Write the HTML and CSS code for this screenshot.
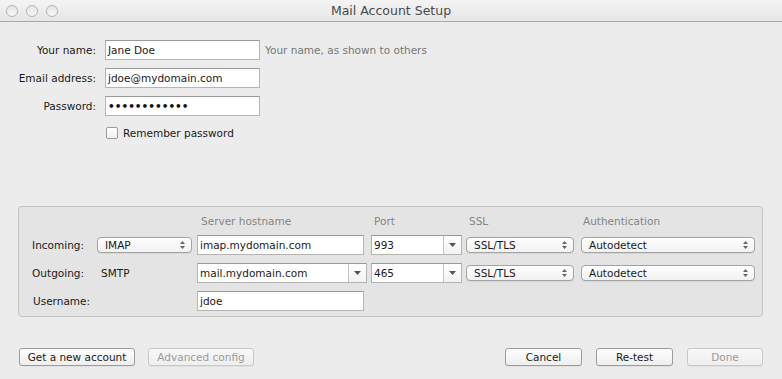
FILE: index.html
```html
<!DOCTYPE html>
<html lang="en">
<head>
    <meta charset="UTF-8">
    <title>Mail Account Setup</title>
    <link rel="stylesheet" href="styles.css">
</head>
<body>
    <div class="window">
        <div class="titlebar">
            <div class="lights">
                <span class="light"></span>
                <span class="light"></span>
                <span class="light"></span>
            </div>
            <div class="title">Mail Account Setup</div>
        </div>

        <div class="panel">
            <div class="identity">
                <label class="label">Your name:</label>
                <div class="row">
                    <div class="field">Jane Doe</div>
                    <span class="hint">Your name, as shown to others</span>
                </div>
                <label class="label">Email address:</label>
                <div class="row">
                    <div class="field">jdoe@mydomain.com</div>
                </div>
                <label class="label">Password:</label>
                <div class="row">
                    <div class="field dots">&bull;&bull;&bull;&bull;&bull;&bull;&bull;&bull;&bull;&bull;&bull;&bull;</div>
                </div>
                <span></span>
                <div class="row check-row">
                    <span class="checkbox"></span>
                    <span>Remember password</span>
                </div>
            </div>

            <div class="servers">
                <span></span>
                <span></span>
                <span class="head head-host">Server hostname</span>
                <span class="head head-port">Port</span>
                <span class="head head-ssl">SSL</span>
                <span class="head head-auth">Authentication</span>

                <span class="slabel">Incoming:</span>
                <div class="popup w-proto"><span>IMAP</span><svg class="updown" width="5" height="8" viewBox="0 0 5 8"><path d="M2.5 0L5 3H0z M2.5 8L5 5H0z" fill="#666"/></svg></div>
                <div class="field w-host">imap.mydomain.com</div>
                <div class="combo w-port"><span class="combo-text">993</span><span class="combo-btn"><svg width="7" height="4" viewBox="0 0 7 4"><path d="M0 0H7L3.5 4z" fill="#555"/></svg></span></div>
                <div class="popup w-ssl"><span>SSL/TLS</span><svg class="updown" width="5" height="8" viewBox="0 0 5 8"><path d="M2.5 0L5 3H0z M2.5 8L5 5H0z" fill="#666"/></svg></div>
                <div class="popup w-auth"><span>Autodetect</span><svg class="updown" width="5" height="8" viewBox="0 0 5 8"><path d="M2.5 0L5 3H0z M2.5 8L5 5H0z" fill="#666"/></svg></div>

                <span class="slabel">Outgoing:</span>
                <span class="smtp">SMTP</span>
                <div class="combo w-hostcombo"><span class="combo-text">mail.mydomain.com</span><span class="combo-btn"><svg width="7" height="4" viewBox="0 0 7 4"><path d="M0 0H7L3.5 4z" fill="#555"/></svg></span></div>
                <div class="combo w-port"><span class="combo-text">465</span><span class="combo-btn"><svg width="7" height="4" viewBox="0 0 7 4"><path d="M0 0H7L3.5 4z" fill="#555"/></svg></span></div>
                <div class="popup w-ssl"><span>SSL/TLS</span><svg class="updown" width="5" height="8" viewBox="0 0 5 8"><path d="M2.5 0L5 3H0z M2.5 8L5 5H0z" fill="#666"/></svg></div>
                <div class="popup w-auth"><span>Autodetect</span><svg class="updown" width="5" height="8" viewBox="0 0 5 8"><path d="M2.5 0L5 3H0z M2.5 8L5 5H0z" fill="#666"/></svg></div>

                <span class="slabel user">Username:</span>
                <span></span>
                <div class="field w-host">jdoe</div>
            </div>

            <div class="actions">
                <div class="group">
                    <button class="btn w-new">Get a new account</button>
                    <button class="btn w-adv" disabled>Advanced config</button>
                </div>
                <div class="group">
                    <button class="btn w-cancel">Cancel</button>
                    <button class="btn w-retest">Re-test</button>
                    <button class="btn w-done" disabled>Done</button>
                </div>
            </div>
        </div>
    </div>
</body>
</html>
```

FILE: styles.css
```css
body {
    margin: 0;
    padding: 0;
    font-family: 'DejaVu Sans', sans-serif;
    font-size: 10.5px;
    color: #1a1a1a;
    background-color: #ececec;
}
.window {
    width: 782px;
    height: 379px;
    overflow: hidden;
    background-color: #ececec;
}
.titlebar {
    height: 21px;
    border-bottom: 1px solid #a9a9a9;
    background: linear-gradient(#f4f4f4, #e6e6e6);
    display: flex;
    align-items: center;
    position: relative;
}
.lights {
    display: flex;
    gap: 8px;
    padding-left: 6px;
}
.light {
    width: 10px;
    height: 10px;
    border: 1px solid #b4b4b4;
    border-radius: 50%;
    background: linear-gradient(#e6e6e6, #f6f6f6);
}
.title {
    position: absolute;
    left: 0;
    right: 0;
    text-align: center;
    font-size: 12.5px;
    color: #4a4a4a;
}
.panel {
    padding: 18px 19px 0 18px;
}
.identity {
    display: grid;
    grid-template-columns: 78px auto;
    column-gap: 9px;
    row-gap: 8px;
    grid-auto-rows: 20px;
}
.label {
    text-align: right;
    align-self: center;
}
.row {
    display: flex;
    align-items: center;
    gap: 5px;
}
.check-row {
    gap: 5px;
    margin-top: -3px;
    padding-left: 1px;
}
.checkbox {
    width: 10px;
    height: 10px;
    border: 1px solid #9c9c9c;
    border-radius: 2px;
    background: linear-gradient(#ffffff, #f0f0f0);
}
.field {
    box-sizing: border-box;
    width: 155px;
    height: 20px;
    line-height: 18px;
    padding-left: 2px;
    background: #fff;
    border: 1px solid #b4b4b4;
    border-top-color: #9a9a9a;
    white-space: nowrap;
}
.dots {
    font-size: 10.5px;
    font-weight: bold;
    color: #111;
}
.hint {
    color: #777;
}
.servers {
    margin-top: 62px;
    border: 1px solid #c4c4c4;
    border-radius: 4px;
    background-color: #e4e4e4;
    padding: 8px 0 5px 0;
    display: grid;
    grid-template-columns: 78px 100px 174px 95px 115px 174px;
    grid-template-rows: 12px 20px 20px 20px;
    row-gap: 8px;
    align-items: center;
}
.head {
    color: #858585;
    line-height: 12px;
}
.head-host { padding-left: 4px; }
.head-port { padding-left: 3px; }
.head-ssl { padding-left: 3px; }
.head-auth { padding-left: 2px; }
.slabel {
    text-align: right;
    padding-right: 13px;
}
.slabel.user {
    text-align: left;
    padding-left: 14px;
    padding-right: 0;
}
.smtp {
    padding-left: 4px;
}
.popup {
    box-sizing: border-box;
    height: 16px;
    border: 1px solid #a3a3a3;
    border-radius: 4px;
    background: linear-gradient(#ffffff, #f1f1f1);
    display: flex;
    align-items: center;
    justify-content: space-between;
    padding: 0 6px 0 7px;
    box-shadow: 0 1px 0 rgba(0,0,0,0.06);
}
.updown {
    display: block;
}
.w-proto { width: 95px; }
.w-host { width: 167px; }
.w-hostcombo { width: 170px; }
.w-port { width: 91px; }
.w-ssl { width: 108px; }
.w-auth { width: 174px; }
.combo {
    box-sizing: border-box;
    height: 20px;
    display: flex;
    background: #fff;
    border: 1px solid #b4b4b4;
    border-top-color: #9a9a9a;
}
.combo-text {
    flex: 1;
    line-height: 18px;
    padding-left: 2px;
    white-space: nowrap;
}
.combo-btn {
    width: 17px;
    border-left: 1px solid #c4c4c4;
    background: linear-gradient(#ffffff, #f2f2f2);
    display: flex;
    align-items: center;
    justify-content: center;
}
.actions {
    margin-top: 31px;
    display: flex;
    justify-content: space-between;
    padding-left: 1px;
}
.group {
    display: flex;
    gap: 14px;
}
.btn {
    box-sizing: border-box;
    height: 18px;
    padding: 0;
    font-family: 'DejaVu Sans', sans-serif;
    font-size: 10.5px;
    color: #1a1a1a;
    border: 1px solid #9c9c9c;
    border-radius: 3px;
    background: linear-gradient(#ffffff, #eeeeee);
    box-shadow: 0 1px 0 rgba(0,0,0,0.05);
}
.btn:disabled {
    color: #9b9b9b;
    border-color: #c9c9c9;
    background: linear-gradient(#f8f8f8, #eeeeee);
}
.w-new { width: 116px; }
.w-adv { width: 106px; margin-left: -1px; }
.w-cancel { width: 77px; }
.w-retest { width: 77px; }
.w-done { width: 76px; }
```
